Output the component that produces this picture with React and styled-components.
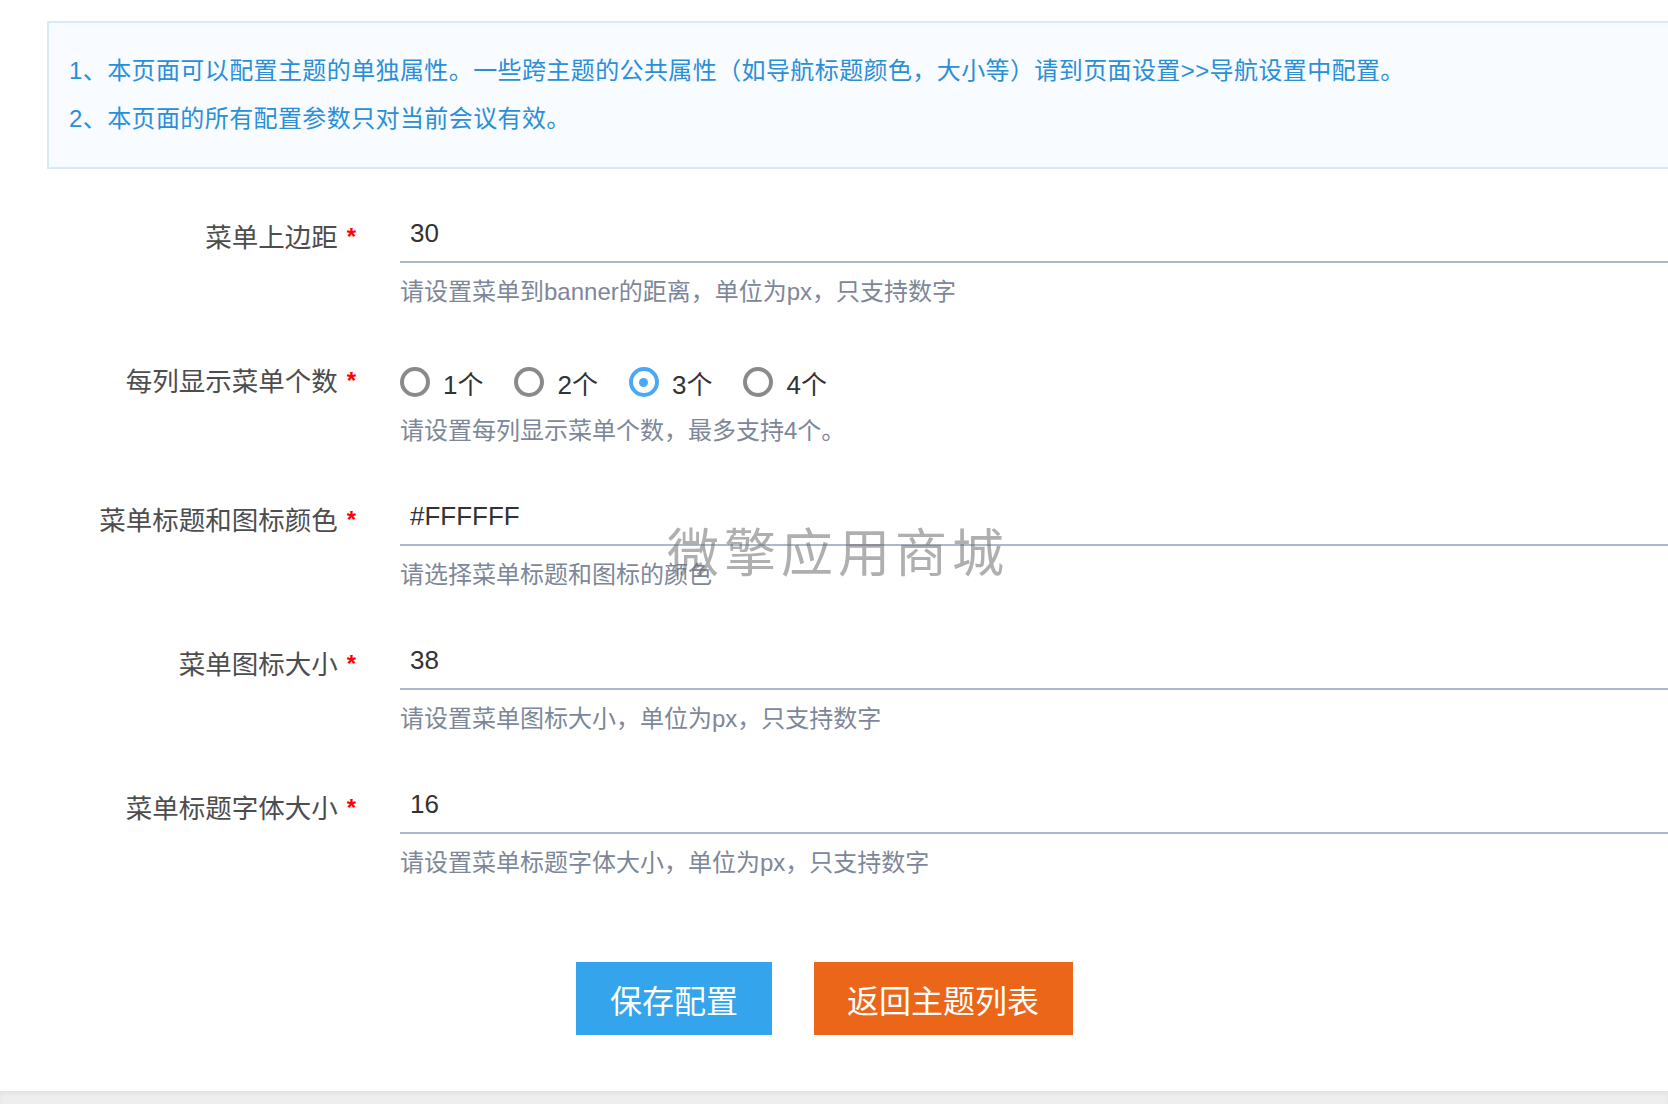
import React, { useState } from 'react';
import styled, { createGlobalStyle } from 'styled-components';

const GlobalStyle = createGlobalStyle`
  html, body {
    margin: 0;
    padding: 0;
    background: #eeeeee;
    overflow: hidden;
  }
  body {
    font-family: 'Liberation Sans', 'Noto Sans CJK SC', sans-serif;
  }
  * {
    box-sizing: border-box;
  }
`;

const Page = styled.div`
  position: relative;
  background: #ffffff;
  padding-top: 21px;
  padding-bottom: 56px;
`;

const Notice = styled.div`
  margin-left: 47px;
  margin-right: -20px;
  background: #f8fbff;
  border: 2px solid #d8e9fa;
  padding: 24px 20px 24px 20px;
  color: #2a8fd6;
  font-size: 24px;
  line-height: 48px;
  letter-spacing: 0.4px;
`;

const Form = styled.form`
  padding-top: 36px;
`;

const FormItem = styled.div`
  display: flex;
  align-items: flex-start;
  margin-bottom: 39px;
`;

const Label = styled.label`
  flex: 0 0 400px;
  height: 58px;
  padding-top: 3px;
  padding-right: 44px;
  display: flex;
  align-items: center;
  justify-content: flex-end;
  font-size: 26.5px;
  color: #4d4d4d;
`;

const Star = styled.span`
  color: #ff0000;
  font-size: 24px;
  font-weight: bold;
  margin-left: 9px;
  position: relative;
  top: 1px;
`;

const Control = styled.div`
  flex: 1;
  min-width: 0;
`;

const TextInput = styled.input`
  display: block;
  width: 100%;
  height: 58px;
  border: none;
  border-bottom: 2px solid #adb9ca;
  outline: none;
  padding: 0 0 0 10px;
  font-family: inherit;
  font-size: 26px;
  color: #333333;
  background: transparent;
`;

const Help = styled.div`
  margin-top: ${p => (p.$tight ? '2px' : '11px')};
  font-size: 24px;
  line-height: 36px;
  color: #7d8799;
`;

const RadioGroup = styled.div`
  display: flex;
  align-items: center;
  height: 58px;
  margin-top: 4px;
`;

const RadioItem = styled.label`
  display: flex;
  align-items: center;
  margin-right: 31px;
  font-size: 26px;
  color: #333333;
  cursor: pointer;
`;

const RadioCircle = styled.span`
  width: 30px;
  height: 30px;
  border-radius: 50%;
  border: 4px solid ${p => (p.$checked ? '#4aa9f7' : '#8a8a8a')};
  display: flex;
  align-items: center;
  justify-content: center;
  margin-right: 13px;

  &::after {
    content: '';
    width: 9px;
    height: 9px;
    border-radius: 50%;
    background: #4aa9f7;
    display: ${p => (p.$checked ? 'block' : 'none')};
  }
`;

const ButtonBar = styled.div`
  display: flex;
  justify-content: center;
  gap: 42px;
  padding-top: 42px;
  padding-right: 19px;
`;

const Button = styled.button`
  height: 73px;
  padding: 0 33.5px;
  border: none;
  border-radius: 0;
  font-family: inherit;
  font-size: 32px;
  color: #ffffff;
  background: ${p => (p.$variant === 'back' ? '#ec661a' : '#34a4ec')};
  cursor: pointer;
`;

const Watermark = styled.div`
  position: absolute;
  left: 667px;
  top: 528px;
  font-size: 52px;
  line-height: 1;
  letter-spacing: 5px;
  color: rgba(110, 110, 110, 0.55);
  pointer-events: none;
  white-space: nowrap;
`;

const Footer = styled.div`
  height: 40px;
  background: #eeeeee;
  box-shadow: inset 0 3px 4px rgba(0, 0, 0, 0.05);
`;

const Field = ({ label, value, help }) => (
  <FormItem>
    <Label>
      {label}
      <Star>*</Star>
    </Label>
    <Control>
      <TextInput defaultValue={value} />
      <Help>{help}</Help>
    </Control>
  </FormItem>
);

export default function App() {
  const [count, setCount] = useState(3);

  return (
    <>
      <GlobalStyle />
      <Page>
        <Notice>
          <div>1、本页面可以配置主题的单独属性。一些跨主题的公共属性（如导航标题颜色，大小等）请到页面设置&gt;&gt;导航设置中配置。</div>
          <div>2、本页面的所有配置参数只对当前会议有效。</div>
        </Notice>

        <Form onSubmit={e => e.preventDefault()}>
          <Field label="菜单上边距" value="30" help="请设置菜单到banner的距离，单位为px，只支持数字" />

          <FormItem>
            <Label>
              每列显示菜单个数
              <Star>*</Star>
            </Label>
            <Control>
              <RadioGroup>
                {[1, 2, 3, 4].map(n => (
                  <RadioItem key={n} onClick={() => setCount(n)}>
                    <RadioCircle $checked={count === n} />
                    {n}个
                  </RadioItem>
                ))}
              </RadioGroup>
              <Help $tight>请设置每列显示菜单个数，最多支持4个。</Help>
            </Control>
          </FormItem>

          <Field label="菜单标题和图标颜色" value="#FFFFFF" help="请选择菜单标题和图标的颜色" />
          <Field label="菜单图标大小" value="38" help="请设置菜单图标大小，单位为px，只支持数字" />
          <Field label="菜单标题字体大小" value="16" help="请设置菜单标题字体大小，单位为px，只支持数字" />

          <ButtonBar>
            <Button type="submit">保存配置</Button>
            <Button type="button" $variant="back">返回主题列表</Button>
          </ButtonBar>
        </Form>

        <Watermark>微擎应用商城</Watermark>
      </Page>
      <Footer />
    </>
  );
}
